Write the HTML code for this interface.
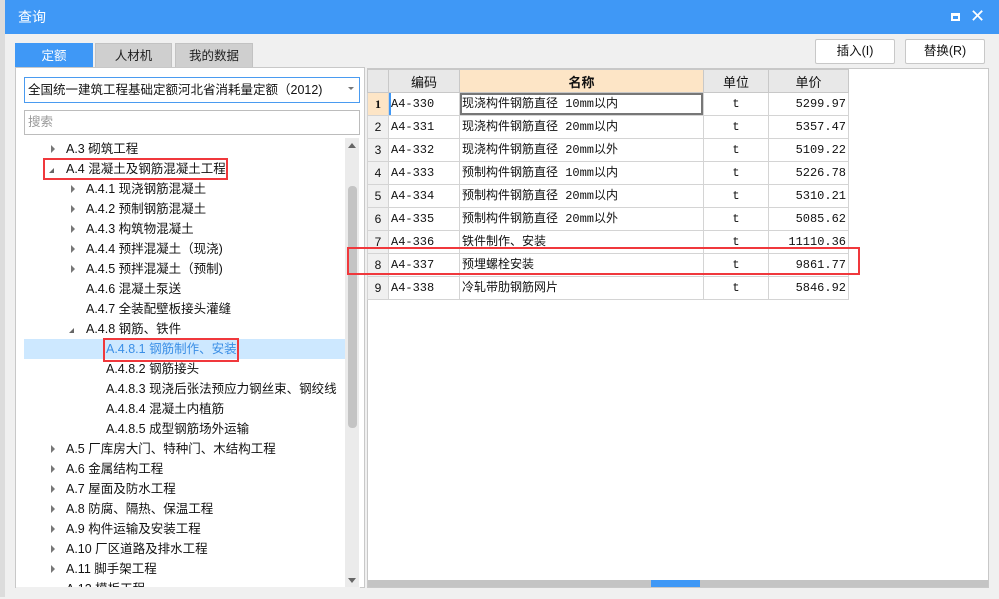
<!DOCTYPE html>
<html><head><meta charset="utf-8"><style>
*{margin:0;padding:0;box-sizing:border-box}
body{width:999px;height:597px;overflow:hidden;background:#f0f0f0;position:relative;font-family:"Liberation Sans","Noto Sans CJK SC",sans-serif;font-size:12px;color:#111}
.a{position:absolute}
.title{left:5px;top:0;width:994px;height:34px;background:#3f98f6;color:#fff;font-size:14px;line-height:34px;padding-left:13px}
.tab{top:43px;height:25px;line-height:25px;text-align:center;font-size:12.5px;background:#cfcfcf;color:#222;border:1px solid #c2c2c2;border-bottom:none}
.tree div{position:absolute;height:20px;line-height:20px;font-size:12.5px;white-space:nowrap}
.tri{position:absolute;width:0;height:0;border-top:4px solid transparent;border-bottom:4px solid transparent;border-left:4px solid #777}
.dtri{position:absolute;width:0;height:0;border-left:5px solid transparent;border-bottom:5px solid #666}
table{border-collapse:collapse;position:absolute;left:367px;top:69px;font-family:"Liberation Mono","Noto Sans CJK SC",monospace;font-size:12px;table-layout:fixed}
td{border:1px solid #d4d4d4;height:23px;line-height:21px;padding:0 2px;white-space:nowrap;background:#fff;overflow:hidden}
td.c{font-family:"Liberation Mono","Noto Sans CJK SC",monospace}
th{border:1px solid #c8c8c8;height:23px;background:#e8e8e8;font-weight:normal;font-family:"Liberation Sans","Noto Sans CJK SC",sans-serif;font-size:13px}
td.n{background:#f0f0f0;text-align:center;font-family:"Liberation Sans",sans-serif}
.red{position:absolute;border:2px solid #f0383c}
.btn{top:39px;height:25px;width:80px;border:1px solid #c8c8c8;background:#fff;border-radius:2px;text-align:center;line-height:23px;font-size:12.5px}
</style></head><body>
<div class="a" style="left:0;top:0;width:5px;height:597px;background:#dcdcdc"></div>
<div class="a title">查询</div>
<div class="a" style="left:951px;top:13px;width:9px;height:8px;border:2px solid #fff;border-top-width:3px"></div>
<div class="a" style="left:970px;top:5px;color:#fff;font-size:18px;line-height:22px">✕</div>
<div class="a tab" style="left:15px;width:78px;background:#3f98f6;color:#fff;border-color:#3f98f6">定额</div>
<div class="a tab" style="left:95px;width:77px">人材机</div>
<div class="a tab" style="left:175px;width:78px">我的数据</div>
<div class="a btn" style="left:815px">插入(I)</div>
<div class="a btn" style="left:905px">替换(R)</div>
<div class="a" style="left:15px;top:67px;width:350px;height:521px;background:#fff;border:1px solid #c8c8c8"></div>
<div class="a" style="left:24px;top:77px;width:336px;height:26px;border:1px solid #4a9bf0;background:#fff;line-height:24px;padding-left:3px;font-size:12.5px">全国统一建筑工程基础定额河北省消耗量定额（2012)</div>
<div class="a" style="left:348px;top:87px;border-left:3px solid transparent;border-right:3px solid transparent;border-top:3px solid #777;width:0;height:0"></div>
<div class="a" style="left:24px;top:110px;width:336px;height:25px;border:1px solid #bcbcbc;background:#fff;line-height:23px;padding-left:3px;color:#999;font-size:12.5px">搜索</div>
<div class="a" style="left:345px;top:138px;width:14px;height:449px;background:#ebebeb"></div>
<div class="a" style="left:348px;top:186px;width:9px;height:242px;background:#c4c4c4;border-radius:4px"></div>
<div class="a" style="left:348px;top:143px;border-left:4px solid transparent;border-right:4px solid transparent;border-bottom:5px solid #666;width:0"></div>
<div class="a" style="left:348px;top:578px;border-left:4px solid transparent;border-right:4px solid transparent;border-top:5px solid #666;width:0"></div>
<div class="a" style="left:24px;top:339px;width:321px;height:20px;background:#cde8ff"></div>
<div class="tree">
<div style="left:66px;top:139px">A.3 砌筑工程</div>
<div style="left:66px;top:159px">A.4 混凝土及钢筋混凝土工程</div>
<div style="left:86px;top:179px">A.4.1 现浇钢筋混凝土</div>
<div style="left:86px;top:199px">A.4.2 预制钢筋混凝土</div>
<div style="left:86px;top:219px">A.4.3 构筑物混凝土</div>
<div style="left:86px;top:239px">A.4.4 预拌混凝土（现浇)</div>
<div style="left:86px;top:259px">A.4.5 预拌混凝土（预制)</div>
<div style="left:86px;top:279px">A.4.6 混凝土泵送</div>
<div style="left:86px;top:299px">A.4.7 全装配壁板接头灌缝</div>
<div style="left:86px;top:319px">A.4.8 钢筋、铁件</div>
<div style="left:106px;top:339px;color:#3a8ee6">A.4.8.1 钢筋制作、安装</div>
<div style="left:106px;top:359px">A.4.8.2 钢筋接头</div>
<div style="left:106px;top:379px">A.4.8.3 现浇后张法预应力钢丝束、钢绞线</div>
<div style="left:106px;top:399px">A.4.8.4 混凝土内植筋</div>
<div style="left:106px;top:419px">A.4.8.5 成型钢筋场外运输</div>
<div style="left:66px;top:439px">A.5 厂库房大门、特种门、木结构工程</div>
<div style="left:66px;top:459px">A.6 金属结构工程</div>
<div style="left:66px;top:479px">A.7 屋面及防水工程</div>
<div style="left:66px;top:499px">A.8 防腐、隔热、保温工程</div>
<div style="left:66px;top:519px">A.9 构件运输及安装工程</div>
<div style="left:66px;top:539px">A.10 厂区道路及排水工程</div>
<div style="left:66px;top:559px">A.11 脚手架工程</div>
<div style="left:66px;top:579px">A.12 模板工程</div>
</div>
<div class="tri" style="left:51px;top:145px"></div>
<div class="dtri" style="left:49px;top:168px"></div>
<div class="tri" style="left:71px;top:185px"></div>
<div class="tri" style="left:71px;top:205px"></div>
<div class="tri" style="left:71px;top:225px"></div>
<div class="tri" style="left:71px;top:245px"></div>
<div class="tri" style="left:71px;top:265px"></div>
<div class="dtri" style="left:69px;top:328px"></div>
<div class="tri" style="left:51px;top:445px"></div>
<div class="tri" style="left:51px;top:465px"></div>
<div class="tri" style="left:51px;top:485px"></div>
<div class="tri" style="left:51px;top:505px"></div>
<div class="tri" style="left:51px;top:525px"></div>
<div class="tri" style="left:51px;top:545px"></div>
<div class="tri" style="left:51px;top:565px"></div>
<div class="a" style="left:16px;top:587px;width:344px;height:10px;background:#f0f0f0"></div>
<div class="a" style="left:367px;top:68px;width:622px;height:520px;background:#fff;border:1px solid #c8c8c8"></div>
<div class="a" style="left:368px;top:580px;width:620px;height:7px;background:#c4c4c4"></div>
<div class="a" style="left:651px;top:580px;width:49px;height:7px;background:#3f98f6"></div>
<table>
<colgroup><col style="width:21px"><col style="width:71px"><col style="width:244px"><col style="width:65px"><col style="width:80px"></colgroup>
<tr><th></th><th>编码</th><th style="background:#fde5c6;font-weight:bold">名称</th><th>单位</th><th>单价</th></tr>
<tr><td class="n" style="background:#fde5c6;font-weight:bold;font-family:'Liberation Serif',serif">1</td><td style="box-shadow:inset 2px 0 #3f98f6">A4-330</td><td style="box-shadow:inset 0 0 0 2px #777">现浇构件钢筋直径 10mm以内</td><td align="center">t</td><td align="right">5299.97</td></tr>
<tr><td class="n">2</td><td>A4-331</td><td>现浇构件钢筋直径 20mm以内</td><td align="center">t</td><td align="right">5357.47</td></tr>
<tr><td class="n">3</td><td>A4-332</td><td>现浇构件钢筋直径 20mm以外</td><td align="center">t</td><td align="right">5109.22</td></tr>
<tr><td class="n">4</td><td>A4-333</td><td>预制构件钢筋直径 10mm以内</td><td align="center">t</td><td align="right">5226.78</td></tr>
<tr><td class="n">5</td><td>A4-334</td><td>预制构件钢筋直径 20mm以内</td><td align="center">t</td><td align="right">5310.21</td></tr>
<tr><td class="n">6</td><td>A4-335</td><td>预制构件钢筋直径 20mm以外</td><td align="center">t</td><td align="right">5085.62</td></tr>
<tr><td class="n">7</td><td>A4-336</td><td>铁件制作、安装</td><td align="center">t</td><td align="right">11110.36</td></tr>
<tr><td class="n">8</td><td>A4-337</td><td>预埋螺栓安装</td><td align="center">t</td><td align="right">9861.77</td></tr>
<tr><td class="n">9</td><td>A4-338</td><td>冷轧带肋钢筋网片</td><td align="center">t</td><td align="right">5846.92</td></tr>
</table>
<div class="red" style="left:43px;top:158px;width:185px;height:22px"></div>
<div class="red" style="left:103px;top:338px;width:136px;height:24px"></div>
<div class="red" style="left:347px;top:247px;width:513px;height:28px"></div>
</body></html>
